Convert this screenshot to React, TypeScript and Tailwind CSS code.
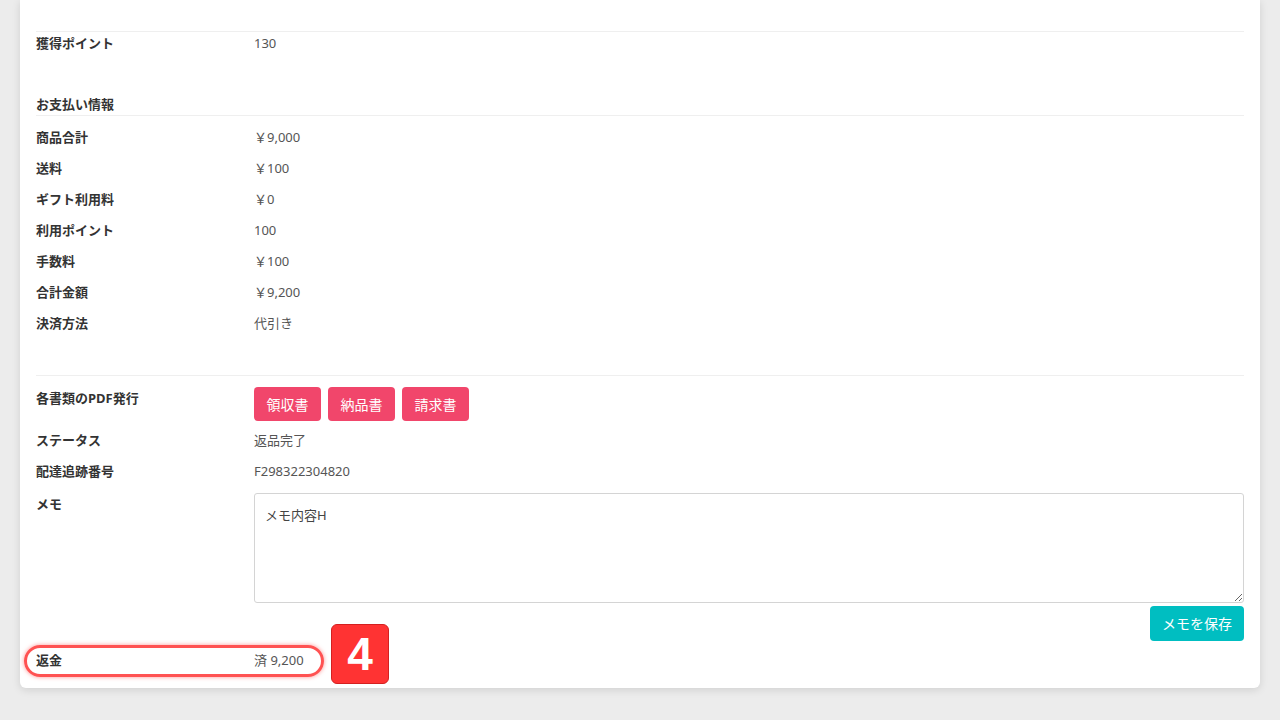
import React from 'react';

const font = { fontFamily: '"Noto Sans", "Noto Sans CJK JP", sans-serif' };

const payments: [string, string][] = [
  ['商品合計', '￥9,000'],
  ['送料', '￥100'],
  ['ギフト利用料', '￥0'],
  ['利用ポイント', '100'],
  ['手数料', '￥100'],
  ['合計金額', '￥9,200'],
  ['決済方法', '代引き'],
];

function Row({ label, value }: { label: string; value: string }) {
  return (
    <div className="flex h-[31px] items-center pt-[1px] text-[13px]">
      <div className="w-[218px] font-bold text-[#333]">{label}</div>
      <div className="text-[#555]">{value}</div>
    </div>
  );
}

export default function App() {
  return (
    <div className="min-h-[720px] bg-[#ececec] px-5 pb-8" style={font}>
      <div className="rounded-b-md bg-white px-4 pb-3 shadow-[0_2px_8px_rgba(0,0,0,0.12)]">
        <div className="h-[31px]" />
        <div className="border-t border-[#efefef]" />
        <div className="flex h-[23px] items-center pt-[1px] text-[13px]">
          <div className="w-[218px] font-bold text-[#333]">獲得ポイント</div>
          <div className="text-[#555]">130</div>
        </div>

        <div className="mt-[39px] flex h-[22px] items-center border-b border-[#efefef] pt-[1px] text-[13px] font-bold text-[#333]">
          お支払い情報
        </div>
        <div className="mt-[6px]">
          {payments.map(([l, v]) => (
            <Row key={l} label={l} value={v} />
          ))}
        </div>

        <div className="mt-[36px] border-t border-[#efefef]" />

        <div className="flex items-start pt-[11px] text-[13px]">
          <div className="w-[218px] pt-[1px] leading-5 font-bold text-[#333]">各書類のPDF発行</div>
          <div className="flex gap-[7px]">
            {['領収書', '納品書', '請求書'].map((b) => (
              <button
                key={b}
                className="flex h-[34px] w-[67px] items-center justify-center rounded-[4px] bg-[#f1466b] text-[14px] text-white"
              >
                {b}
              </button>
            ))}
          </div>
        </div>

        <div className="mt-[4px]">
          <Row label="ステータス" value="返品完了" />
          <Row label="配達追跡番号" value="F298322304820" />
        </div>

        <div className="mt-[6px] flex items-start text-[13px]">
          <div className="w-[218px] pt-[1px] leading-5 font-bold text-[#333]">メモ</div>
          <textarea
            className="h-[110px] flex-1 rounded-[3px] border border-[#d4d4d4] px-[10px] pt-[12px] text-[13px] text-[#444] outline-none"
            style={font}
            defaultValue="メモ内容H"
          />
        </div>
        <div className="mt-[3px] flex justify-end">
          <button className="flex h-[35px] w-[94px] items-center justify-center rounded-[4px] bg-[#00bec1] text-[14px] text-white">
            メモを保存
          </button>
        </div>

        <div className="relative mt-[4px]">
          <Row label="返金" value="済 9,200" />
          <div className="pointer-events-none absolute top-0 left-[-12px] h-[32px] w-[300px] rounded-full border-[3px] border-[#ff5252] shadow-[0_0_4px_rgba(255,60,60,0.55)]" />
          <div className="absolute top-[-21px] left-[295px] flex h-[60px] w-[58px] items-center justify-center rounded-[6px] border border-[#d42020] bg-[#ff3333]">
            <span
              className="text-[46px] leading-none font-bold text-white"
              style={{ fontFamily: '"Liberation Sans", Arial, sans-serif' }}
            >
              4
            </span>
          </div>
        </div>
      </div>
    </div>
  );
}
